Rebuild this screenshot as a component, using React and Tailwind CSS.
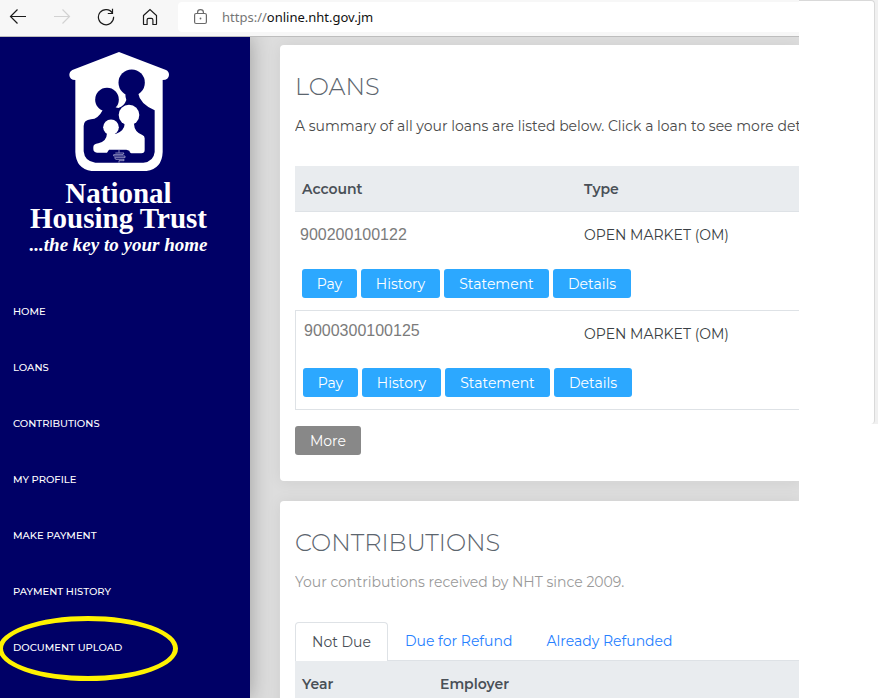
import React from "react";

const navItems = [
  "HOME",
  "LOANS",
  "CONTRIBUTIONS",
  "MY PROFILE",
  "MAKE PAYMENT",
  "PAYMENT HISTORY",
  "DOCUMENT UPLOAD",
];

const loans = [
  { account: "900200100122", type: "OPEN MARKET (OM)" },
  { account: "9000300100125", type: "OPEN MARKET (OM)", boxed: true },
];

const loanActions = [
  { label: "Pay", width: "w-[55px]" },
  { label: "History", width: "w-[79px]" },
  { label: "Statement", width: "w-[105px]" },
  { label: "Details", width: "w-[78px]" },
];

function ToolIcon({ label, tone, children }) {
  return (
    <button type="button" aria-label={label} className={tone}>
      <svg width="18" height="18" viewBox="0 0 18 18" fill="none" stroke="currentColor" strokeWidth="1.2" className="block">
        {children}
      </svg>
    </button>
  );
}

function Toolbar() {
  return (
    <header className="flex h-[37px] shrink-0 items-start border-b border-[#bdbdbd] bg-[#f7f7f7] pl-[9px]">
      <div className="flex gap-[26px] pt-2">
        <ToolIcon label="Back" tone="text-[#1b1b1b]">
          <path d="M17 8.500H1.500M8.500 1.500l-7 7 7 7" />
        </ToolIcon>
        <ToolIcon label="Forward" tone="text-[#d2d2d2]">
          <path d="M1 8.500h15.500M9.500 1.500l7 7-7 7" />
        </ToolIcon>
        <ToolIcon label="Refresh" tone="text-[#1b1b1b]">
          <path d="M15.500 5.200A7.600 7.600 0 1 0 16.600 8.800M15.500 .8v4.700H10.800" />
        </ToolIcon>
        <ToolIcon label="Home" tone="text-[#1b1b1b]">
          <path d="M2.500 7.500 9 1.500l6.500 6v8.400a.6.6 0 0 1-.6.6h-3v-4.600a1.500 1.500 0 0 0-1.500-1.500H7.600a1.500 1.500 0 0 0-1.500 1.500v4.600h-3a.6.6 0 0 1-.6-.6z" />
        </ToolIcon>
      </div>
      <label className="mt-[2px] ml-[19px] flex h-[30px] min-w-0 flex-1 items-center rounded-l bg-white pt-0.5 pl-4 font-['Noto_Sans','Open_Sans',sans-serif] text-[13px]">
        <svg width="13" height="16" viewBox="0 0 13 16" fill="none" stroke="#6a6a6a" strokeWidth="1.200" className="mr-[15px] mb-0.5 shrink-0">
          <rect x=".6" y="4.500" width="11.800" height="10" rx="1.500" />
          <path d="M3.600 4.500V3.300a2.900 2.700 0 0 1 5.800 0v1.200" />
          <circle cx="6.500" cy="9.500" r=".9" fill="#6a6a6a" stroke="none" />
        </svg>
        <span className="text-[#767676]">https://</span>
        <input
          aria-label="Address"
          defaultValue="online.nht.gov.jm"
          className="min-w-0 flex-1 bg-transparent text-[#111111] outline-none"
        />
      </label>
    </header>
  );
}

function Logo() {
  return (
    <div className="flex h-[246px] flex-col items-center pt-[14px] pr-[13px] font-['Liberation_Serif',serif] font-bold text-white">
      <svg width="104" height="120" viewBox="18 15 312 360" className="shrink-0">
        <path
          fill="#fff"
          d="M174 18l141 54q9 4 9 15q-1 15-19 15V318Q303 374 245 376H103Q45 374 43 318V102q-17 0-18-15q0-10 9-15z"
        />
        <g fill="#000066">
          <circle cx="212" cy="110" r="39.500" />
          <circle cx="138" cy="161" r="35.500" />
          <path d="M68 240Q68 222 90 220Q112 218 124 194L132 182L166 184Q192 172 194 143H232Q236 172 281 193V318Q278 347 247 350H103Q71 347 68 316z" />
        </g>
        <g fill="#fff">
          <path d="M164 184Q188 172 192 146L196 162Q190 180 172 186z" />
          <circle cx="204" cy="207" r="31" />
          <circle cx="150" cy="244" r="23.500" />
          <path d="M97 303Q97 294 112 292Q137 287 138 262L164 264Q190 255 191 234H219Q220 258 244 267Q251 270 251 277V312Q251 322 241 322H211Q206 321 205 314L196 311H144L138 320H108Q97 319 97 309z" />
        </g>
        <path
          d="M174 312v8M163 321h26l-3 5h-28v4h34v5h-31l3 5h25v4h-15v6"
          fill="none"
          stroke="#c9c9e4"
          strokeWidth="2"
        />
      </svg>
      <div className="mt-[10px] text-center text-[29px] leading-[25px]">
        National
        <br />
        Housing Trust
      </div>
      <div className="mt-1 text-[19px] leading-5 italic">...the key to your home</div>
    </div>
  );
}

function Sidebar() {
  return (
    <aside className="relative z-10 w-[250px] shrink-0 bg-[#000066] shadow-[0_0_20px_rgba(0,0,0,0.3)]">
      <Logo />
      <nav>
        {navItems.map((item) => (
          <a key={item} href="#" className="relative flex h-14 items-center pl-[13px] text-[10px] font-medium text-white">
            {item}
            {item === "DOCUMENT UPLOAD" && (
              <span className="absolute -top-[3px] -left-[2px] h-[65px] w-[180px] rounded-[50%] border-[5px] border-[#fff200]" />
            )}
          </a>
        ))}
      </nav>
    </aside>
  );
}

function Card({ title, note, noteTone, children }) {
  return (
    <section className="shrink-0 rounded-l bg-white pt-[26px] pb-[26px] pl-[15px] shadow-[0_1px_15px_1px_rgba(39,39,39,0.06)]">
      <h2 className="text-2xl leading-8 font-light text-[#5c656e]">{title}</h2>
      <p className={"mt-[11px] mb-7 overflow-hidden text-sm leading-6 whitespace-nowrap " + noteTone}>{note}</p>
      {children}
    </section>
  );
}

function LoansTable() {
  return (
    <table className="w-full table-fixed border-separate border-spacing-0 text-left text-sm">
      <colgroup>
        <col className="w-[282px]" />
        <col />
      </colgroup>
      <thead>
        <tr className="h-[46px] bg-[#e9ecef] text-[#495057]">
          <th className="border-b border-[#dee2e6] px-[7px] font-semibold">Account</th>
          <th className="border-b border-[#dee2e6] px-[7px] font-semibold">Type</th>
        </tr>
      </thead>
      {loans.map((loan) => (
        <tbody key={loan.account}>
          <tr className={loan.boxed ? "h-[46px]" : "h-[45px]"}>
            <td
              className={
                "border-[#dee2e6] font-['Liberation_Sans',Arial,sans-serif] text-base leading-5 text-[#7b7b7b] " +
                (loan.boxed ? "border-t border-l pb-1.5 pl-2" : "pl-[5px]")
              }
            >
              {loan.account}
            </td>
            <td className={"border-[#dee2e6] px-[7px] text-[#3a3f44] " + (loan.boxed ? "border-t" : "")}>{loan.type}</td>
          </tr>
          <tr className={loan.boxed ? "h-[54px]" : "h-[53px]"}>
            <td
              colSpan={2}
              className={"border-[#dee2e6] px-[7px] pt-3 align-top " + (loan.boxed ? "border-b border-l" : "")}
            >
              <div className="flex gap-1">
                {loanActions.map((action) => (
                  <button
                    key={action.label}
                    type="button"
                    className={"h-[29px] shrink-0 rounded-[3px] bg-[#2ca8ff] text-white " + action.width}
                  >
                    {action.label}
                  </button>
                ))}
              </div>
            </td>
          </tr>
        </tbody>
      ))}
    </table>
  );
}

function Contributions() {
  return (
    <>
      <div role="tablist" className="flex h-[39px] border-b border-[#dee2e6] text-sm text-[#2680ff]">
        <button
          type="button"
          role="tab"
          aria-selected="true"
          className="-mb-px w-[93px] rounded-t border border-b-0 border-[#dee2e6] bg-white text-[#495057]"
        >
          Not Due
        </button>
        <button type="button" role="tab" aria-selected="false" className="px-[17px]">
          Due for Refund
        </button>
        <button type="button" role="tab" aria-selected="false" className="px-[17px]">
          Already Refunded
        </button>
      </div>
      <table className="w-full table-fixed text-left text-sm">
        <colgroup>
          <col className="w-[138px]" />
          <col />
        </colgroup>
        <thead>
          <tr className="h-[45px] bg-[#e9ecef] text-[#495057]">
            <th className="px-[7px] font-semibold">Year</th>
            <th className="px-[7px] font-semibold">Employer</th>
          </tr>
        </thead>
      </table>
    </>
  );
}

export default function App() {
  return (
    <div className="flex h-screen overflow-hidden bg-white font-['Montserrat','Inter',sans-serif]">
      <div className="flex min-w-0 flex-1 flex-col">
        <Toolbar />
        <div className="flex min-h-0 flex-1 overflow-hidden">
          <Sidebar />
          <main className="flex min-w-0 flex-1 flex-col gap-5 bg-[#dddddd] pt-2 pl-[30px]">
            <Card
              title="LOANS"
              note="A summary of all your loans are listed below. Click a loan to see more details."
              noteTone="text-[#4a4a4a]"
            >
              <LoansTable />
              <button type="button" className="mt-4 block h-[29px] w-[66px] rounded-[3px] bg-[#888888] text-sm text-white">
                More
              </button>
            </Card>
            <Card
              title="CONTRIBUTIONS"
              note="Your contributions received by NHT since 2009."
              noteTone="text-[#9a9a9a]"
            >
              <Contributions />
            </Card>
          </main>
        </div>
      </div>
      <aside className="w-[79px] shrink-0">
        <div className="h-[424px] bg-[#f0f0f0] pr-[3px]">
          <div className="h-full rounded-r border-t border-r border-[#d9d9d9] bg-white" />
        </div>
      </aside>
    </div>
  );
}
